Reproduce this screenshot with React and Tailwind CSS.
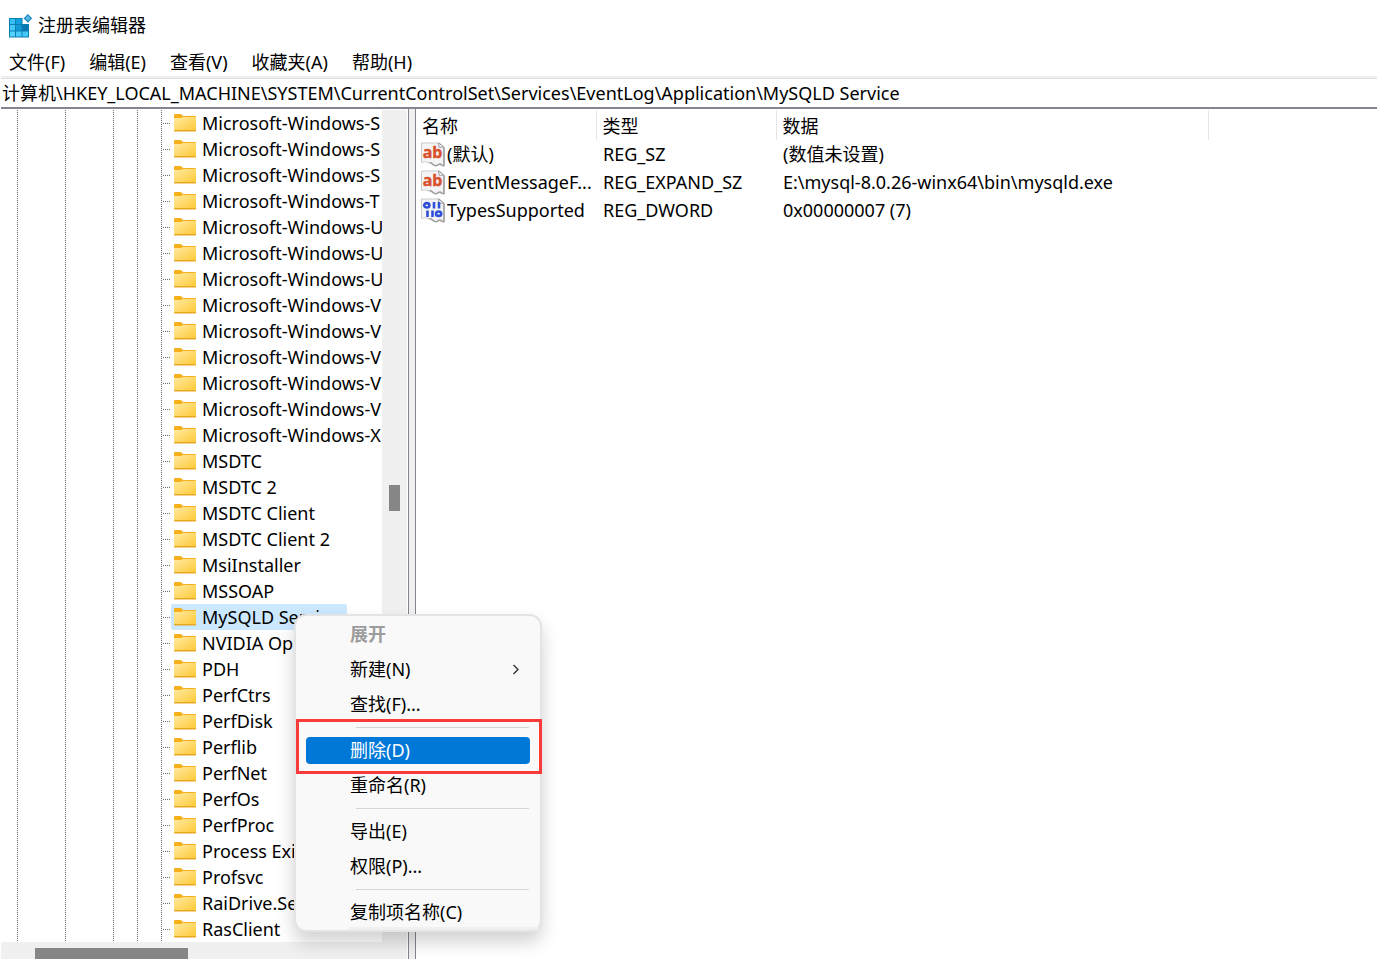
import React from "react";

const treeKeys = [
  "Microsoft-Windows-S",
  "Microsoft-Windows-S",
  "Microsoft-Windows-S",
  "Microsoft-Windows-T",
  "Microsoft-Windows-U",
  "Microsoft-Windows-U",
  "Microsoft-Windows-U",
  "Microsoft-Windows-V",
  "Microsoft-Windows-V",
  "Microsoft-Windows-V",
  "Microsoft-Windows-V",
  "Microsoft-Windows-V",
  "Microsoft-Windows-X",
  "MSDTC",
  "MSDTC 2",
  "MSDTC Client",
  "MSDTC Client 2",
  "MsiInstaller",
  "MSSOAP",
  "MySQLD Service",
  "NVIDIA Op",
  "PDH",
  "PerfCtrs",
  "PerfDisk",
  "Perflib",
  "PerfNet",
  "PerfOs",
  "PerfProc",
  "Process Exi",
  "Profsvc",
  "RaiDrive.Se",
  "RasClient",
];
const selectedKey = "MySQLD Service";

const values = [
  { icon: "string", name: "(默认)", type: "REG_SZ", data: "(数值未设置)" },
  {
    icon: "string",
    name: "EventMessageF...",
    type: "REG_EXPAND_SZ",
    data: "E:\\mysql-8.0.26-winx64\\bin\\mysqld.exe",
  },
  { icon: "binary", name: "TypesSupported", type: "REG_DWORD", data: "0x00000007 (7)" },
];

function AppIcon() {
  return (
    <svg width="24" height="25" viewBox="0 0 24 25" aria-hidden="true" className="shrink-0">
      <path d="M0 5H13.5V11H20V24.5H0Z" fill="#0a7fb5" />
      <rect x="1" y="6" width="5" height="5" fill="#36bdf2" />
      <rect x="7" y="6" width="5.5" height="5" fill="#12a0de" />
      <rect x="1" y="12" width="5" height="5.5" fill="#45c8f8" />
      <rect x="7" y="12" width="5.5" height="5.5" fill="#1597d3" />
      <rect x="13.5" y="12" width="5.5" height="5.5" fill="#0b76ad" />
      <rect x="1" y="18.5" width="5" height="5" fill="#5bd2fb" />
      <rect x="7" y="18.5" width="5.5" height="5" fill="#4bcaf8" />
      <rect x="13.5" y="18.5" width="5.5" height="5" fill="#45c8f8" />
      <path d="M18.7 1L23.2 5.2L19 9.8L14.6 5.6Z" fill="#1c88bd" />
      <path d="M18.8 2.6L21.6 5.2L18.9 8.1L16.2 5.5Z" fill="#58b8e2" />
    </svg>
  );
}

function FolderIcon() {
  return (
    <svg width="22" height="18" viewBox="0 0 22 18" aria-hidden="true" className="shrink-0">
      <defs>
        <linearGradient id="folder" x1="0" y1="0" x2="1" y2="1">
          <stop offset="0" stopColor="#ffe9a3" />
          <stop offset="1" stopColor="#ffc935" />
        </linearGradient>
      </defs>
      <path d="M0 1Q0 0 1 0H7L9 2H21Q22 2 22 3V6H0Z" fill="#f6b01b" />
      <path d="M0 4H7L9 3H22V17H0Z" fill="url(#folder)" />
      <path d="M0 16H22V16.5Q22 17.5 21 17.5H1Q0 17.5 0 16.5Z" fill="#e9a820" />
    </svg>
  );
}

function ValueIcon({ kind }) {
  return (
    <svg width="24" height="25" viewBox="0 0 24 25" aria-hidden="true" className="shrink-0">
      <path
        d="M.5 1H18.5L23 5V23.5C21.5 24.5 20.5 21.8 18.5 22.2C16.5 22.6 16 24.2 14 23.6C11.5 22.8 11 20.5 8.5 20.8C6 21 5.5 19.5 3.5 19.8L.5 20.5Z"
        fill="#f4f4f6"
        stroke="#cbcbce"
      />
      <path
        d="M23 5.5V23.5C21.5 24.5 20.5 21.8 18.5 22.2C16.5 22.6 16 24.2 14 23.6C11.5 22.8 11 20.5 8.5 20.8"
        fill="none"
        stroke="#a0a0a0"
        strokeWidth="1.6"
      />
      <path d="M17.5 1L18 5.2H23Z" fill="#fff" stroke="#999" />
      {kind === "string" ? (
        <text
          x="11.5"
          y="16"
          textAnchor="middle"
          fill="#d9512c"
          stroke="#d9512c"
          strokeWidth=".4"
          className="font-['Noto_Sans'] text-[16px] font-bold"
        >
          ab
        </text>
      ) : (
        <g fill="none" stroke="#2f4fd8" strokeWidth="2.6">
          <ellipse cx="5.8" cy="7.3" rx="2.6" ry="2.2" />
          <path d="M13 4V10.5M18 4V10.5M6.5 12.5V19M11.5 12.5V19" />
          <ellipse cx="17.6" cy="15.7" rx="2.6" ry="2.2" />
        </g>
      )}
    </svg>
  );
}

const guide =
  "shrink-0 self-stretch bg-[linear-gradient(#666_50%,transparent_50%)] bg-[length:1px_2px] bg-repeat-y bg-right";

function TreeRow({ label }) {
  const selected = label === selectedKey;
  return (
    <li role="treeitem" aria-selected={selected} className="flex h-[26px] items-center">
      <span className={`${guide} w-[18px]`} />
      <span className={`${guide} w-12`} />
      <span className={`${guide} w-12`} />
      <span className={`${guide} w-6`} />
      <span className={`${guide} w-6`} />
      <span className="h-px w-[9px] shrink-0 bg-[linear-gradient(90deg,transparent_50%,#666_50%)] bg-[length:2px_1px]" />
      <button
        type="button"
        className={`flex h-[26px] shrink-0 items-center gap-1.5 rounded-xs pr-2 pl-[3px] whitespace-nowrap ${
          selected ? "bg-[#cce8ff]" : ""
        }`}
      >
        <FolderIcon />
        {label}
      </button>
    </li>
  );
}

function MenuItem({ children, disabled, active, submenu }) {
  return (
    <li role="none" className="flex h-[35px] items-center px-2.5">
      <button
        type="button"
        role="menuitem"
        disabled={disabled}
        className={`flex h-[27px] w-full items-center justify-between rounded pr-2.5 pb-0.5 pl-11 ${
          active ? "bg-[#0078d7] text-white" : disabled ? "font-bold text-[#9c9c9c]" : ""
        }`}
      >
        {children}
        {submenu && (
          <svg width="8" height="12" viewBox="0 0 8 12" fill="none" stroke="#333" strokeWidth="1.4" aria-hidden="true">
            <path d="M1.5 2L6 6.5L1.5 11" />
          </svg>
        )}
      </button>
    </li>
  );
}

function MenuSeparator() {
  return (
    <li role="separator" className="flex h-[11px] items-center pr-[11px] pl-[60px]">
      <span className="h-px w-full bg-[#d5d5d5]" />
    </li>
  );
}

function ContextMenu() {
  return (
    <div className="absolute top-[614px] left-[294px] w-[248px]">
      <ul
        role="menu"
        className="overflow-hidden rounded-xl border-2 border-[#e4e4e4] bg-[#f9f9f9] pt-px shadow-[0_10px_18px_rgba(0,0,0,0.18)]"
      >
        <MenuItem disabled>展开</MenuItem>
        <MenuItem submenu>新建(N)</MenuItem>
        <MenuItem>查找(F)...</MenuItem>
        <MenuSeparator />
        <MenuItem active>删除(D)</MenuItem>
        <MenuItem>重命名(R)</MenuItem>
        <MenuSeparator />
        <MenuItem>导出(E)</MenuItem>
        <MenuItem>权限(P)...</MenuItem>
        <MenuSeparator />
        <MenuItem>复制项名称(C)</MenuItem>
      </ul>
      <div className="pointer-events-none absolute top-[105px] left-0.5 h-[55px] w-[246px] border-3 border-[#fb3a3a]" />
      <div className="absolute right-1 bottom-0.5 h-[3px] w-[190px] bg-[#f0f0f0]" />
    </div>
  );
}

export default function App() {
  return (
    <div className="relative flex min-h-screen flex-col bg-white pr-[18px] pb-[3px] font-['Noto_Sans','Noto_Sans_CJK_SC',sans-serif] text-[18px] leading-[26px] text-black">
      <header className="flex h-[50px] items-center gap-[5px] pl-[9px]">
        <AppIcon />
        <h1>注册表编辑器</h1>
      </header>

      <nav className="flex h-[26px] items-center gap-6 pb-0.5 pl-[9px]">
        <button type="button">文件(F)</button>
        <button type="button">编辑(E)</button>
        <button type="button">查看(V)</button>
        <button type="button">收藏夹(A)</button>
        <button type="button">帮助(H)</button>
      </nav>

      <div className="ml-px h-[3px] border-b border-[#e0e0e0] bg-[#f0f0f0]" />
      <input
        type="text"
        aria-label="地址"
        defaultValue={"计算机\\HKEY_LOCAL_MACHINE\\SYSTEM\\CurrentControlSet\\Services\\EventLog\\Application\\MySQLD Service"}
        className="ml-px h-[30px] border-b-2 border-[#84858c] pb-0.5 pl-px outline-none"
      />

      <main className="flex flex-1">
        <section className="flex w-[409px] shrink-0 flex-col border-r border-[#84858c] pt-px">
          <div className="flex flex-1">
            <ul role="tree" className="min-w-0 flex-1 overflow-hidden">
              {treeKeys.map((label, i) => (
                <TreeRow key={i} label={label} />
              ))}
            </ul>
            <div className="mr-px w-[25px] bg-[#f0f0f0] pt-[375px] pl-[7px]">
              <div className="h-[26px] w-[11px] bg-[#868686]" />
            </div>
          </div>
          <div className="mr-px ml-px h-[17px] bg-[#f0f0f0] pt-[6px] pl-[34px]">
            <div className="h-[11px] w-[153px] bg-[#868686]" />
          </div>
        </section>
        <div className="w-1.5 shrink-0 bg-[#f0f0f0]" />
        <section className="min-w-0 flex-1 border-l border-[#84858c] pt-px">
          <table className="table-fixed border-collapse text-left whitespace-nowrap">
            <colgroup>
              <col className="w-[180px]" />
              <col className="w-[180px]" />
              <col className="w-[432px]" />
            </colgroup>
            <thead>
              <tr className="h-[30px]">
                <th className="border-r border-[#e5e5e5] p-0 pt-0.5 pl-1.5 font-normal">名称</th>
                <th className="border-r border-[#e5e5e5] p-0 pt-0.5 pl-1.5 font-normal">类型</th>
                <th className="border-r border-[#e5e5e5] p-0 pt-0.5 pl-1.5 font-normal">数据</th>
              </tr>
            </thead>
            <tbody>
              {values.map((v) => (
                <tr key={v.name} className="h-7">
                  <td className="p-0 pl-[5px]">
                    <div className="flex items-center gap-0.5">
                      <ValueIcon kind={v.icon} />
                      {v.name}
                    </div>
                  </td>
                  <td className="p-0 pl-[7px]">{v.type}</td>
                  <td className="p-0 pl-[7px]">{v.data}</td>
                </tr>
              ))}
            </tbody>
          </table>
        </section>
      </main>

      <ContextMenu />
    </div>
  );
}
